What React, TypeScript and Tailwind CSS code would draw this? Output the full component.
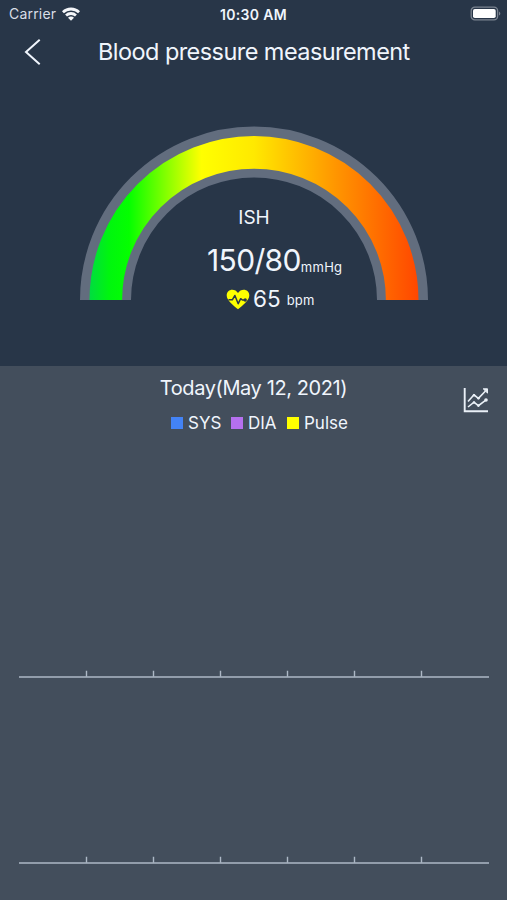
const WifiIcon = () => (
  <svg width="20" height="15" viewBox="0 0 20 15" fill="#f4f6f9">
    <path d="M1 4.2a13 13 0 0 1 18 0l-1.900 2.100a10.200 10.200 0 0 0-14.200 0z" />
    <path d="M4.100 7.500a8.500 8.500 0 0 1 11.800 0l-1.900 2a5.800 5.800 0 0 0-8 0z" />
    <path d="M7 10.700a4.200 4.200 0 0 1 6 0l-3 3.100z" />
  </svg>
);

const BatteryIcon = () => (
  <svg width="32" height="16" viewBox="0 0 32 16">
    <rect x="1.2" y="1.2" width="26.4" height="12.6" rx="3.6" fill="none" stroke="#7b8490" strokeWidth="1.3" />
    <rect x="3" y="3" width="22.7" height="9" rx="1.8" fill="#fff" />
    <path d="M29 5.4c1.8.8 1.8 3.4 0 4.2z" fill="#7b8490" />
  </svg>
);

const Gauge = () => (
  <svg className="absolute top-0 left-0" width="348" height="174" viewBox="0 0 348 174">
    <defs>
      <linearGradient id="level" gradientUnits="userSpaceOnUse" x1="9.5" y1="0" x2="338.5" y2="0">
        <stop offset="0" stopColor="#00dc40" />
        <stop offset="0.06" stopColor="#00f60e" />
        <stop offset="0.12" stopColor="#04ff00" />
        <stop offset="0.34" stopColor="#ffff00" />
        <stop offset="0.5" stopColor="#ffe900" />
        <stop offset="0.75" stopColor="#ff9500" />
        <stop offset="1" stopColor="#ff4700" />
      </linearGradient>
    </defs>
    <path d="M25.5 174a148.5 148 0 0 1 297 0" fill="none" stroke="#626d7e" strokeWidth="51" />
    <path d="M25.8 174a148.2 147.700 0 0 1 296.4 0" fill="none" stroke="url(#level)" strokeWidth="32.6" />
  </svg>
);

const HeartIcon = () => (
  <svg width="24" height="21" viewBox="0 0 24 21">
    <path d="M12 20.2C8 16.8.7 11.4.7 6.4.7 2.9 3.3.8 6.2.8c2.5 0 4.5 1.2 5.8 3.3C13.3 2 15.3.8 17.8.8c2.9 0 5.5 2.1 5.5 5.6 0 5-7.3 10.4-11.3 13.8z" fill="#fdff00" />
    <path d="M2.5 10.8h3.8l2.6-4.3 3.3 8.2 2.5-5 1.7 1.3H20" fill="none" stroke="#283648" strokeWidth="1.5" strokeLinejoin="round" />
    <circle cx="19.200" cy="11" r="1.700" fill="#283648" />
  </svg>
);

const TrendIcon = () => (
  <svg width="28" height="28" viewBox="0 0 28 28" fill="none" stroke="#eaf0f7">
    <path d="M2.7 2v23.2H26" strokeWidth="1.9" />
    <path d="M6 15.500l6-6.700 4.400 3.500L23.5 5M6 21l6-4.800 4.4 3.5L23.5 14.3" strokeWidth="1.6" />
    <path d="M21.2 2.8h4.3v4.3z" fill="#eaf0f7" strokeWidth="1" />
    <circle cx="24" cy="14" r="1.8" fill="#eaf0f7" stroke="none" />
    <circle cx="12" cy="9.2" r="1.300" fill="#eaf0f7" stroke="none" />
    <circle cx="16.4" cy="12.2" r="1.300" fill="#eaf0f7" stroke="none" />
    <circle cx="12" cy="16.5" r="1.300" fill="#eaf0f7" stroke="none" />
    <circle cx="16.4" cy="19.6" r="1.300" fill="#eaf0f7" stroke="none" />
  </svg>
);

const Axis = () => (
  <svg width="470" height="8" viewBox="0 0 470 8" stroke="#adb8c6">
    <path d="M0 7H470" strokeWidth="1.7" />
    <path d="M67.5 .7v6M134.5 .7v6M201.5 .7v6M268.5 .7v6M335.5 .7v6M402.5 .7v6" strokeWidth="1.4" />
  </svg>
);

const series = [
  { name: "SYS", swatch: "bg-[#4383f6]", box: "w-[60px]" },
  { name: "DIA", swatch: "bg-[#b570ef]", box: "w-[56px]" },
  { name: "Pulse", swatch: "bg-[#ffff00]", box: "w-[62px]" },
];

export default function App() {
  return (
    <main className="flex h-[900px] w-[507px] flex-col overflow-hidden bg-[#434e5c] font-['Inter',sans-serif] whitespace-nowrap text-[#f0f5fc]">
      <section className="h-[366px] bg-[#283648]">
        <header className="grid h-[28px] grid-cols-3 items-center">
          <div className="flex items-center gap-[5px] pl-[9px] text-[#d9dee6]">
            <span className="text-[14px] leading-[28px] tracking-[0.2px]">Carrier</span>
            <WifiIcon />
          </div>
          <div className="text-center text-[14px] font-semibold tracking-[0.3px]">10:30 AM</div>
          <div className="flex justify-end pr-[5px]"><BatteryIcon /></div>
        </header>
        <nav className="flex h-[48px] items-center pl-[24px]">
          <svg width="18" height="28" viewBox="0 0 18 28" fill="none" stroke="#f0f5fc" strokeWidth="2">
            <path d="M15.7 1.7L2 14l13.700 12.300" />
          </svg>
          <h1 className="ml-[56px] text-[23.5px] leading-[48px] tracking-[-0.56px]">Blood pressure measurement</h1>
        </nav>
        <div className="relative mt-[50px] ml-[80px] h-[200px] w-[348px]">
          <Gauge />
          <div className="relative flex flex-col pt-[80px]">
            <div className="h-[24px] text-center text-[19px] leading-[24px]">ISH</div>
            <div className="mt-[10px] flex h-[40px] items-baseline pl-[127px]">
              <span className="text-[30px] leading-[40px] tracking-[-0.65px]">150/80</span>
              <span className="relative top-px text-[13px] tracking-[0.3px]">mmHg</span>
            </div>
            <div className="mt-[6px] flex h-[26px] items-center pl-[146px]">
              <HeartIcon />
              <span className="ml-[3px] text-[22.5px] leading-[26px]">65</span>
              <span className="ml-[6px] pt-px text-[13px] leading-[26px] tracking-[0.2px]">bpm</span>
            </div>
          </div>
        </div>
      </section>
      <section className="flex flex-1 flex-col">
        <div className="relative h-[72px]">
          <h2 className="pt-[8px] text-center text-[20px] leading-[28px] tracking-[-0.4px]">Today(May 12, 2021)</h2>
          <div className="mt-[9px] ml-[171px] flex h-[24px]">
            {series.map((s) => (
              <div key={s.name} className={`flex items-center gap-[5px] ${s.box}`}>
                <span className={`size-[12px] shrink-0 ${s.swatch}`} />
                <span className="text-[17px] leading-[24px]">{s.name}</span>
              </div>
            ))}
          </div>
          <div className="absolute top-[20px] right-[17px]"><TrendIcon /></div>
        </div>
        <div className="mt-[232px] ml-[19px] h-[8px]"><Axis /></div>
        <div className="mt-[178px] ml-[19px] h-[8px]"><Axis /></div>
      </section>
    </main>
  );
}
